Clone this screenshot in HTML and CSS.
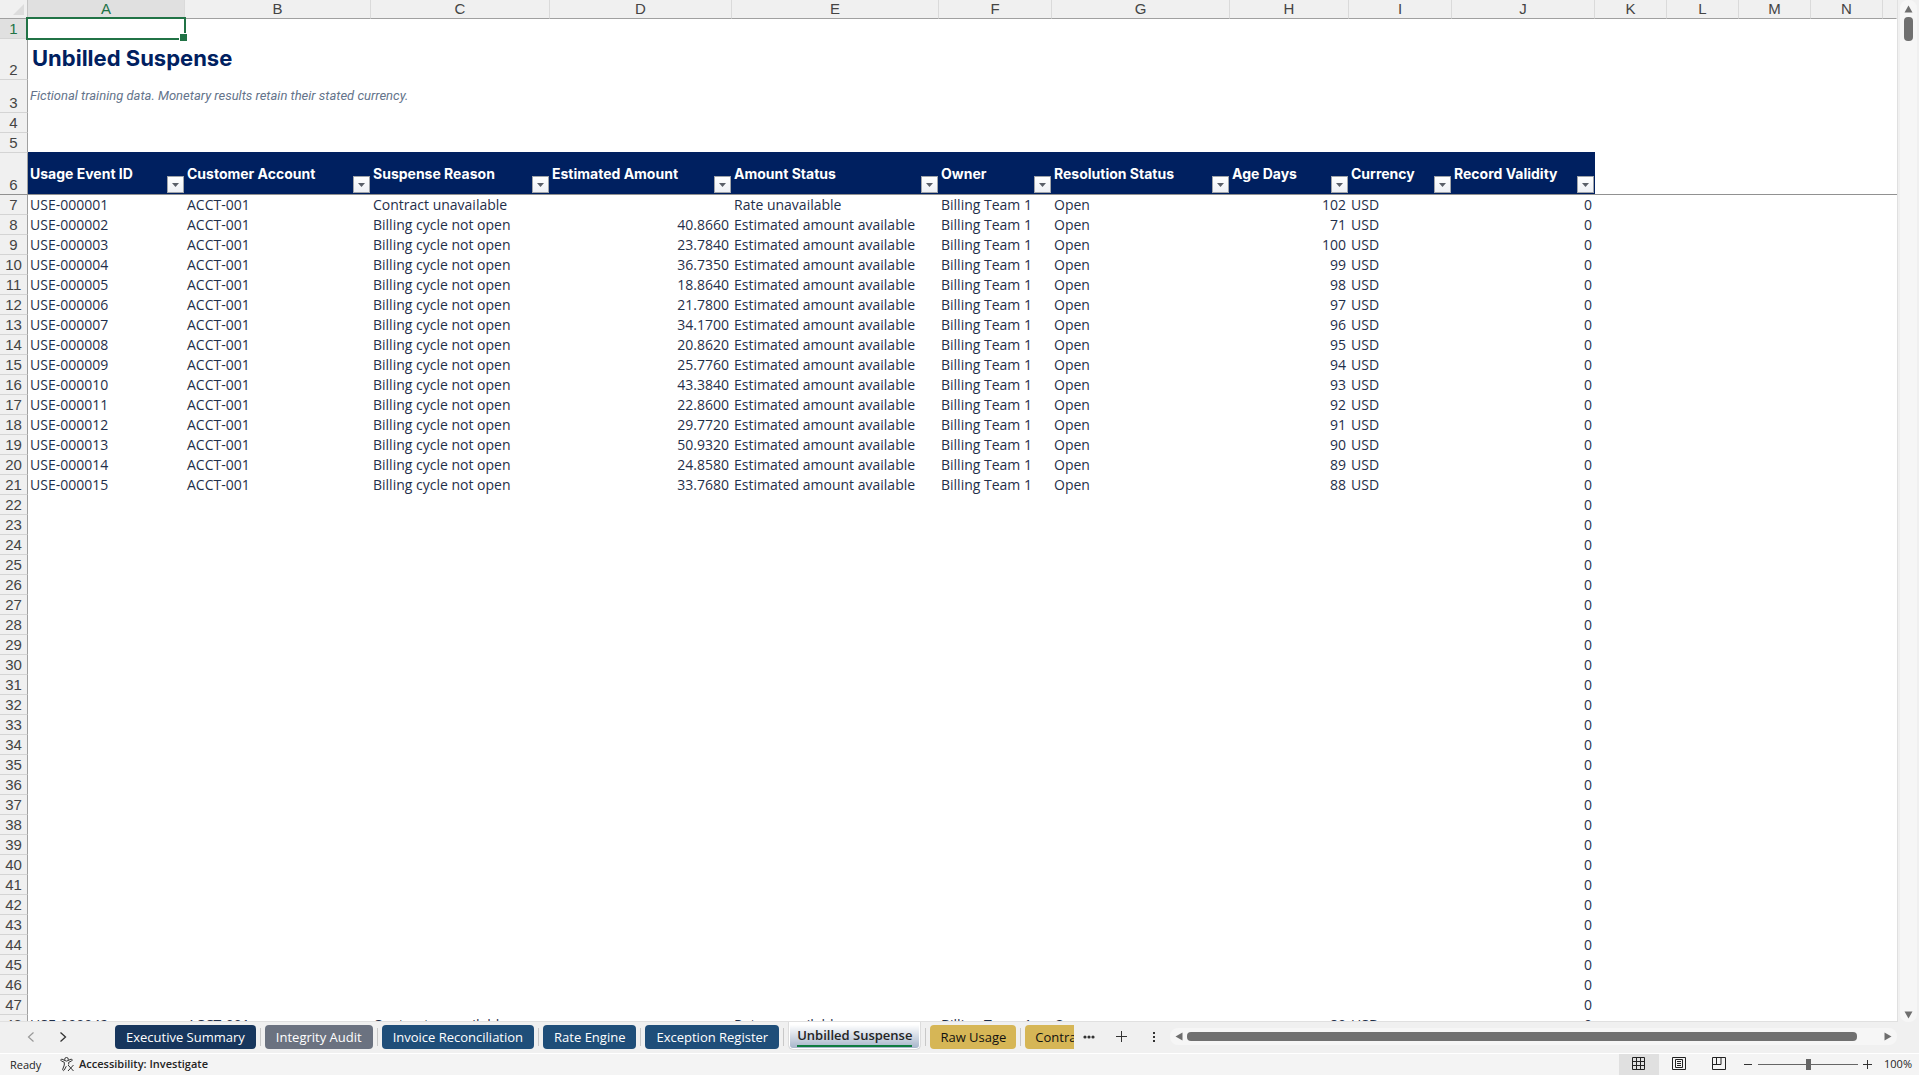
FILE: index.html
```html
<!DOCTYPE html>
<html lang="en">
<head>
<meta charset="utf-8">
<title>Unbilled Suspense</title>
<link rel="stylesheet" href="styles.css">
</head>
<body>
<main class="workbook">
  <div class="sheet-area">
    <div class="sheet">
      <table class="grid">
        <colgroup>
          <col class="c-num"><col class="c-a"><col class="c-b"><col class="c-c"><col class="c-d"><col class="c-e"><col class="c-f"><col class="c-g"><col class="c-h"><col class="c-i"><col class="c-j"><col class="c-std"><col class="c-std"><col class="c-std"><col class="c-std"><col>
        </colgroup>
        <thead>
          <tr class="letters">
            <th class="corner"><svg width="12" height="12" viewBox="0 0 12 12" aria-hidden="true"><path d="M11 0V11H0Z" fill="#dcdcdc"/></svg></th>
            <th class="on">A</th><th>B</th><th>C</th><th>D</th><th>E</th><th>F</th><th>G</th><th>H</th><th>I</th><th>J</th><th>K</th><th>L</th><th>M</th><th>N</th><th class="last"></th>
          </tr>
        </thead>
        <tbody id="rows">
          <tr><th class="on">1</th><td class="active-cell"><span class="selection"></span></td><td colspan="14"></td></tr>
          <tr class="row-title"><th>2</th><td colspan="15"><h1>Unbilled Suspense</h1></td></tr>
          <tr class="row-note"><th>3</th><td colspan="15">Fictional training data. Monetary results retain their stated currency.</td></tr>
          <tr><th>4</th><td colspan="15"></td></tr>
          <tr><th>5</th><td colspan="15"></td></tr>
          <tr class="fields" id="fields"><th>6</th></tr>
        </tbody>
      </table>
    </div>
    <div class="vscroll" role="scrollbar" aria-orientation="vertical" aria-controls="rows" aria-valuenow="0">
      <svg width="9" height="8" viewBox="0 0 9 8" aria-hidden="true"><path d="M4.5 .5 8.5 7.5H.5Z"/></svg>
      <span class="vthumb"></span>
      <svg class="down" width="9" height="8" viewBox="0 0 9 8" aria-hidden="true"><path d="M4.5 7.5 8.5 .5H.5Z"/></svg>
    </div>
  </div>

  <nav class="tabbar" aria-label="Sheets">
    <button class="icon-btn prev" aria-label="Previous sheets"><svg width="8" height="10" viewBox="0 0 8 10"><path d="M6.5 .5 1.5 5l5 4.500" fill="none" stroke="#999" stroke-width="1.200"/></svg></button>
    <button class="icon-btn next" aria-label="Next sheets"><svg width="8" height="10" viewBox="0 0 8 10"><path d="M1.500 .5 6.500 5l-5 4.500" fill="none" stroke="#333" stroke-width="1.300"/></svg></button>
    <div class="tabs">
      <button class="tab navy">Executive Summary</button><i class="sep"></i>
      <button class="tab gray">Integrity Audit</button><i class="sep"></i>
      <button class="tab blue">Invoice Reconciliation</button><i class="sep"></i>
      <button class="tab blue">Rate Engine</button><i class="sep"></i>
      <button class="tab blue">Exception Register</button><i class="sep"></i>
      <button class="tab current" aria-current="page"><span>Unbilled Suspense</span></button><i class="sep"></i>
      <button class="tab gold">Raw Usage</button><i class="sep"></i>
      <button class="tab gold">Contracts</button>
    </div>
    <button class="icon-btn more" aria-label="More sheets"><svg width="12" height="4" viewBox="0 0 12 4" fill="#333"><circle cx="2" cy="2" r="1.600"/><circle cx="6" cy="2" r="1.600"/><circle cx="10" cy="2" r="1.600"/></svg></button>
    <button class="icon-btn add" aria-label="New sheet"><svg width="11" height="11" viewBox="0 0 11 11"><path d="M5.500 0V11M0 5.500H11" stroke="#333"/></svg></button>
    <button class="icon-btn split" aria-label="Resize tabs"><svg width="2" height="12" viewBox="0 0 2 12" fill="#333"><path d="M0 1h2v2H0zM0 5h2v2H0zM0 9h2v2H0z"/></svg></button>
    <div class="hscroll" role="scrollbar" aria-orientation="horizontal" aria-controls="rows" aria-valuenow="0">
      <svg width="8" height="9" viewBox="0 0 8 9" aria-hidden="true"><path d="M.5 4.500 7.500 .5v8Z"/></svg>
      <span class="hthumb"></span>
      <svg width="8" height="9" viewBox="0 0 8 9" aria-hidden="true"><path d="M7.500 4.500 .5 .5v8Z"/></svg>
    </div>
  </nav>

  <footer class="status">
    <span class="ready">Ready</span>
    <button class="access"><svg width="15" height="15" viewBox="0 0 15 15" fill="none" stroke="#333" stroke-width="1"><circle cx="6.500" cy="2.300" r="1.800"/><path d="M5 3.500 2 2.200C.8 1.900 .3 3.400 1.300 3.900L4.300 5.300V8L2.700 12.300c-.3 1.200 1.100 1.700 1.600.7L6.300 9.200M8 3.500 11 2.200c1.200-.3 1.700 1.200.7 1.700L8.700 5.300V7.500M8 8l5.500 6M13.500 8 8 14"/></svg>Accessibility: Investigate</button>
    <div class="views">
      <button class="view pressed" aria-label="Normal"><svg width="14" height="14" viewBox="0 0 14 14"><path d="M.5 .5h12v12H.5zM.5 4.500h12M.5 8.500h12M4.500 .5v12M8.500 .5v12"/></svg></button>
      <button class="view" aria-label="Page layout"><svg width="14" height="14" viewBox="0 0 14 14"><path d="M.5 .5h13v12H.5zM3.500 2.500h7v8h-7zM5 4.500h4M5 6.500h4M5 8.500h4"/></svg></button>
      <button class="view" aria-label="Page break preview"><svg width="14" height="14" viewBox="0 0 14 14"><path d="M.5 .5h13v12H.5zM.5 7.500h8.500V.5M4.500 .5v7"/></svg></button>
    </div>
    <button class="zoom-btn" aria-label="Zoom out"><svg width="9" height="9" viewBox="0 0 9 9"><path d="M0 4.500h8"/></svg></button>
    <input class="zoom" type="range" min="0" max="100" value="50" aria-label="Zoom">
    <button class="zoom-btn" aria-label="Zoom in"><svg width="9" height="9" viewBox="0 0 9 9"><path d="M0 4.500h9M4.500 0v9"/></svg></button>
    <span class="percent">100%</span>
  </footer>
</main>
<script src="sheet.js"></script>
</body>
</html>
```
FILE: styles.css
```css
* { box-sizing: border-box; }

body {
  margin: 0;
  font-family: "Open Sans", "Liberation Sans", sans-serif;
  color: #242424;
}

button {
  margin: 0;
  padding: 0;
  border: 0;
  background: none;
  font: inherit;
  color: inherit;
}

svg { display: block; }

.workbook {
  display: flex;
  flex-direction: column;
  height: 100vh;
  overflow: hidden;
  background: #f0f0f0;
}

/* Grid */
.sheet-area {
  display: flex;
  flex: 1;
  min-height: 0;
}

.sheet {
  flex: 1;
  min-width: 0;
  overflow: hidden;
  background: #fff;
  border-right: 1px solid #e0e0e0;
  border-bottom: 1px solid #e0e0e0;
}

.grid {
  width: 100%;
  table-layout: fixed;
  border-collapse: separate;
  border-spacing: 0;
}

.c-num { width: 28px; }
.c-a { width: 157px; }
.c-b { width: 186px; }
.c-c { width: 179px; }
.c-d { width: 182px; }
.c-e { width: 207px; }
.c-f { width: 113px; }
.c-g { width: 178px; }
.c-h { width: 119px; }
.c-i { width: 103px; }
.c-j { width: 143px; }
.c-std { width: 72px; }

.grid th,
.grid td {
  padding: 0;
  height: 20px;
}

.grid th {
  font: 15px/19px "Liberation Sans", Arial, sans-serif;
  color: #444;
  background: #f0f0f0;
}

.grid .letters th {
  height: 19px;
  line-height: 18px;
  border-right: 1px solid #dadada;
  border-bottom: 1px solid #a0a0a0;
}

.grid .letters .last { border-right-color: #f0f0f0; }

.letters .corner svg { margin: 2px 0 0 13px; }

tbody th {
  vertical-align: bottom;
  border-right: 1px solid #a0a0a0;
  border-bottom: 1px solid #d4d4d4;
}

.grid .letters .corner { border-right-color: #c4c4c4; }

.grid .on {
  color: #217346;
  background: #e0e0e0;
}

.grid td {
  padding: 0 3px 0 2px;
  font-size: 14px;
  line-height: 19px;
  vertical-align: top;
  white-space: nowrap;
  color: #1f2f4a;
}

.grid .num { text-align: right; }

.grid .active-cell { position: relative; }

.selection {
  position: absolute;
  inset: -2px -1px -1px -2px;
  border: 2px solid #217346;
}

.selection::after {
  content: "";
  position: absolute;
  right: -4px;
  bottom: -4px;
  width: 7px;
  height: 7px;
  background: #217346;
  border: 1px solid #fff;
}

.grid .row-title th { height: 41px; }
.grid .row-note th { height: 33px; }
.grid .row-title td { padding-left: 4px; }

h1 {
  margin: 0;
  font: bold 22px/39px Inter, "Liberation Sans", sans-serif;
  color: #002060;
}

.grid .row-note td {
  font: italic 13px/31px Roboto, "Liberation Sans", sans-serif;
  color: #64748b;
}

.grid .fields th,
.grid .fields td {
  height: 42px;
  border-bottom: 1px solid #919191;
}

.grid .fields .field {
  position: relative;
  vertical-align: middle;
  font: bold 14px/20px Inter, "Liberation Sans", sans-serif;
  color: #fff;
  background: #002060;
  box-shadow: 0 -1px #002060;
}

.filter {
  position: absolute;
  right: 1px;
  bottom: 1px;
  display: grid;
  place-items: center;
  width: 17px;
  height: 17px;
  border: 1px solid #a0a4aa;
  background: linear-gradient(#fff, #eef0f5);
}

/* Scroll bars */
.vscroll,
.hscroll {
  display: flex;
  align-items: center;
  background: #f6f6f6;
  fill: #6e6e6e;
}

.vscroll {
  flex-direction: column;
  width: 17px;
  margin: 0 2px 0 2px;
  padding: 5px 0 3px;
  border-radius: 8px;
}

.vthumb {
  width: 9px;
  height: 24px;
  margin-top: 4px;
  border-radius: 4px;
  background: #707070;
}

.down { margin-top: auto; }

.hscroll {
  flex: 1;
  height: 17px;
  margin: 0 22px 0 0;
  padding: 0 5px;
  border-radius: 8px;
}

.hthumb {
  flex: 1;
  height: 9px;
  margin: 0 27px 0 4px;
  border-radius: 4px;
  background: #707070;
}

/* Sheet tabs */
.tabbar {
  display: flex;
  align-items: center;
  height: 31px;
  padding-bottom: 2px;
}

.icon-btn {
  display: grid;
  place-items: center;
  width: 32px;
  height: 24px;
}

.prev { margin-left: 15px; }
.next { margin-right: 36px; }
.more { width: 30px; }
.add { width: 34px; }

.tabs {
  display: flex;
  align-self: stretch;
  align-items: center;
  width: 959px;
  overflow: hidden;
  gap: 4px;
}

.tab {
  flex: none;
  height: 24px;
  padding: 0 11px;
  border-radius: 4px;
  font-size: 13px;
  line-height: 24px;
  color: #fff;
}

.navy { background: #17365d; }
.gray { background: #6b7280; }
.blue { background: #1f4e79; }
.gold { padding: 0 10px; background: #d6b656; color: #111; }

.current {
  align-self: flex-start;
  height: 28px;
  padding: 0 8px;
  border: 1px solid #dcdcdc;
  border-top: 0;
  border-radius: 0 0 5px 5px;
  background: linear-gradient(#fff 10%, #a3b2c8);
  box-shadow: inset 0 0 0 1px #fff;
  font-weight: 600;
  color: #242424;
}

.current span {
  display: block;
  line-height: 20px;
  border-bottom: 2px solid #107c41;
}

.sep {
  flex: none;
  width: 1px;
  height: 18px;
  background: #c8c8c8;
}

/* Status bar */
.status {
  display: flex;
  align-items: center;
  height: 22px;
  border-top: 1px solid #fff;
  background: #f4f4f4;
  font-size: 11px;
  line-height: 20px;
}

.ready { width: 50px; padding-left: 10px; }

.access {
  display: flex;
  align-items: center;
  gap: 4px;
  margin-left: 10px;
  padding-bottom: 1px;
  font-weight: 600;
}

.views {
  display: flex;
  align-self: stretch;
  margin-left: auto;
}

.view {
  display: grid;
  place-items: center;
  width: 40px;
  padding-bottom: 1px;
  fill: none;
  stroke: #222;
}

.pressed { background: #e0e0e0; }

.zoom-btn {
  display: grid;
  place-items: center;
  width: 19px;
  height: 20px;
  stroke: #333;
}

.zoom {
  appearance: none;
  width: 100px;
  height: 11px;
  margin: 0;
  background: linear-gradient(#666, #666) center / 100% 1px no-repeat;
}

.zoom::-webkit-slider-thumb {
  appearance: none;
  width: 5px;
  height: 11px;
  background: #666;
}

.percent {
  width: 42px;
  padding: 0 7px 1px 0;
  text-align: right;
}
```
FILE: sheet.js
```
const fieldNames = ["Usage Event ID", "Customer Account", "Suspense Reason", "Estimated Amount",
  "Amount Status", "Owner", "Resolution Status", "Age Days", "Currency", "Record Validity"];

const amounts = ["", "40.8660", "23.7840", "36.7350", "18.8640", "21.7800", "34.1700", "20.8620",
  "25.7760", "43.3840", "22.8600", "29.7720", "50.9320", "24.8580", "33.7680"];
const ages = [102, 71, 100, 99, 98, 97, 96, 95, 94, 93, 92, 91, 90, 89, 88];

const arrow = '<svg width="7" height="4" viewBox="0 0 7 4"><path d="M0 0H7L3.500 4Z" fill="#5a5f68"/></svg>';

function record(id, amount, age) {
  return [
    "USE-" + String(id).padStart(6, "0"), "ACCT-001",
    amount ? "Billing cycle not open" : "Contract unavailable", amount,
    amount ? "Estimated amount available" : "Rate unavailable",
    "Billing Team 1", "Open", age, "USD", 0
  ];
}

const fields = document.getElementById("fields");
fields.insertAdjacentHTML("beforeend", fieldNames.map(name =>
  `<td class="field">${name}<button class="filter" aria-label="Filter ${name}">${arrow}</button></td>`
).join("") + '<td colspan="5"></td>');

const numeric = [3, 7, 9];
let html = "";
for (let row = 7; row <= 48; row++) {
  let cells = Array(9).fill("").concat(0);
  if (row < 22) cells = record(row - 6, amounts[row - 7], ages[row - 7]);
  if (row === 48) cells = record(42, "", 89);
  html += `<tr><th>${row}</th>` + cells.map((value, i) =>
    `<td${numeric.includes(i) ? ' class="num"' : ""}>${value}</td>`).join("") +
    '<td colspan="5"></td></tr>';
}
document.getElementById("rows").insertAdjacentHTML("beforeend", html);
```
